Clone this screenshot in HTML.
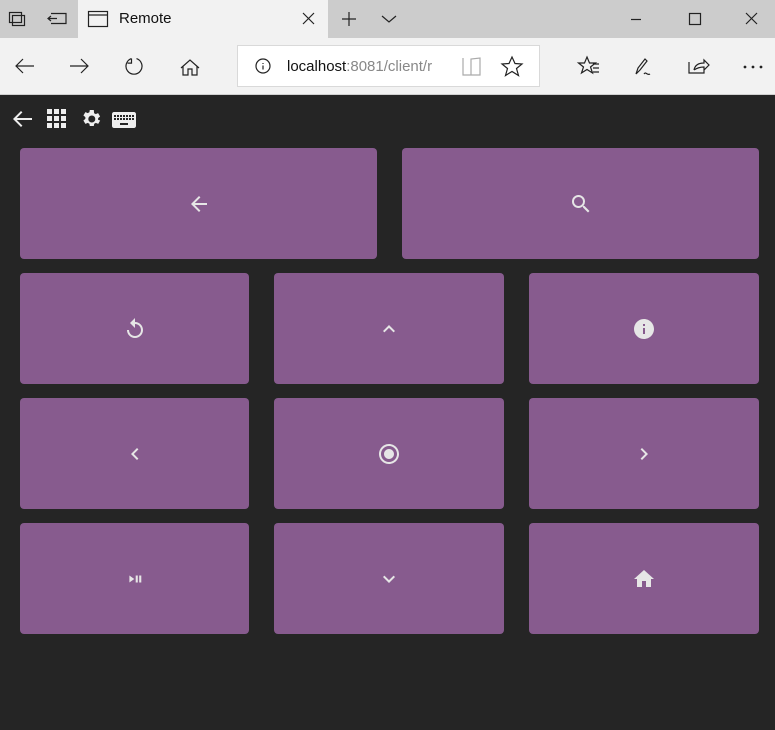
<!DOCTYPE html>
<html><head><meta charset="utf-8"><style>
*{margin:0;padding:0;box-sizing:border-box}
body{width:775px;height:730px;background:#252525;font-family:"Liberation Sans",sans-serif;position:relative;overflow:hidden}
.abs{position:absolute}
.btn{position:absolute;background:#875b8e;border-radius:4px;display:flex;align-items:center;justify-content:center}
.btn svg{width:24px;height:24px;fill:#e6e6e6}
.ico{position:absolute;stroke:#222;fill:none;stroke-width:1.2}
</style></head><body>
<div class="abs" style="left:0;top:0;width:775px;height:38px;background:#cccccc"></div>
<div class="abs" style="left:78px;top:0;width:250px;height:38px;background:#f2f2f2"></div>
<div class="abs" style="left:0;top:38px;width:775px;height:56px;background:#f2f2f2"></div>
<div class="abs" style="left:0;top:94px;width:775px;height:1px;background:#d0d0d0"></div>
<div class="abs" style="left:119px;top:10px;font-size:15px;color:#111">Remote</div>
<svg class="ico" style="left:0;top:0" width="775" height="94" viewBox="0 0 775 94">
<rect x="9.5" y="12.5" width="12" height="10"/><rect x="12.5" y="15.5" width="12" height="10"/>
<path d="M51 13.5h15v10h-15M49 18.5h8M51 16l-3 2.5 3 2.5"/>
<rect x="88.5" y="11.5" width="19" height="15"/><path d="M88.5 15h19"/>
<path d="M303 13l11 11M314 13l-11 11"/>
<path d="M349 12v14M342 19h14"/>
<path d="M382 16l7 6 7-6"/>
<path d="M631 19.5h10"/><rect x="689.5" y="13.5" width="11" height="11"/><path d="M746 13l11 11M757 13l-11 11"/>
<path d="M34 66H16M23 59l-7 7 7 7"/>
<path d="M70 66h18M81 59l7 7-7 7"/>
<path d="M131.5 58.6a8 8 0 1 0 5 0M131.5 58.6v4.5h-4"/>
<path d="M181 68l9-8 9 8M183 66v9h5v-6h4v6h5v-9"/>
<rect x="237.5" y="45.5" width="302" height="41" fill="#fff" stroke="#d9d9d9" stroke-width="1"/>
<circle cx="263" cy="66" r="7"/><path d="M263 63v1M263 65.5v4"/>
<path d="M463 58v17h8v-16M471 59v16h9V58z" stroke="#aaa"/>
<path d="M512 57l3 6.5 7 .5-5.5 4.5 2 7-6.5-4-6.5 4 2-7-5.5-4.5 7-.5z"/>
<path d="M587 57l2.5 6h6l-5 4 2 6-5.5-3.5-5.5 3.5 2-6-5-4h6zM593 64h6M593 68h6M593 72h6"/>
<path d="M636 74l2-6 7-9 2 2-7 9zM644 74c2-3 3 2 6 0"/>
<path d="M689 62v11h15v-5M694 70c1-5 5-7 10-7v-3l5 5-5 5v-3c-4 0-7 1-10 3"/>
<circle cx="745" cy="67" r=".8" fill="#222"/><circle cx="753" cy="67" r=".8" fill="#222"/><circle cx="761" cy="67" r=".8" fill="#222"/>
</svg>
<div class="abs" style="left:287px;top:58px;font-size:15px;color:#111">localhost<span style="color:#888">:8081/client/r</span></div>
<svg class="abs" style="left:10px;top:107px" width="130" height="26" viewBox="0 0 130 26" fill="#eee">
<path d="M22 11H6.8l5.6-5.6L11 4l-8 8 8 8 1.4-1.4L6.8 13H22z"/>
<g transform="translate(36,1)"><rect x="1" y="1" width="5" height="5"/><rect x="8" y="1" width="5" height="5"/><rect x="15" y="1" width="5" height="5"/><rect x="1" y="8" width="5" height="5"/><rect x="8" y="8" width="5" height="5"/><rect x="15" y="8" width="5" height="5"/><rect x="1" y="15" width="5" height="5"/><rect x="8" y="15" width="5" height="5"/><rect x="15" y="15" width="5" height="5"/></g>
<g transform="translate(69,0)"><path d="M19.1 12.9a7 7 0 0 0 0-1.8l2-1.6-2-3.4-2.4 1a7 7 0 0 0-1.6-.9L14.8 3h-4l-.4 2.2a7 7 0 0 0-1.6.9l-2.4-1-2 3.4 2 1.6a7 7 0 0 0 0 1.8l-2 1.6 2 3.4 2.4-1a7 7 0 0 0 1.6.9l.4 2.2h4l.4-2.2a7 7 0 0 0 1.6-.9l2.4 1 2-3.4zM12.8 15.5a3.5 3.5 0 1 1 0-7 3.5 3.5 0 0 1 0 7z"/></g>
<g transform="translate(100,2)"><path d="M24 3H4C2.9 3 2 3.9 2 5v12c0 1.1.9 2 2 2h20c1.1 0 2-.9 2-2V5c0-1.1-.9-2-2-2zM13 6h2v2h-2zm0 3h2v2h-2zM10 6h2v2h-2zm0 3h2v2h-2zM7 6h2v2H7zm0 3h2v2H7zM4 9h2v2H4zm0-3h2v2H4zm14 10H10v-2h8zm0-5h-2V9h2zm0-3h-2V6h2zm3 3h-2V9h2zm0-3h-2V6h2zm3 3h-2V9h2zm0-3h-2V6h2z" fill-rule="evenodd"/></g>
</svg>
<div class="btn" style="left:20px;top:148px;width:357px;height:111px"><svg viewBox="0 0 24 24"><path d="M20 11H7.83l5.59-5.59L12 4l-8 8 8 8 1.41-1.41L7.83 13H20z"/></svg></div>
<div class="btn" style="left:402px;top:148px;width:357px;height:111px"><svg viewBox="0 0 24 24"><path d="M15.5 14h-.79l-.28-.27A6.47 6.47 0 0 0 16 9.5 6.5 6.5 0 1 0 9.5 16c1.61 0 3.090-.59 4.23-1.57l.27.28v.79l5 4.99L20.49 19zm-6 0C7.01 14 5 11.99 5 9.5S7.01 5 9.5 5 14 7.01 14 9.5 11.99 14 9.5 14z"/></svg></div>
<div class="btn" style="left:20px;top:273px;width:229px;height:111px"><svg viewBox="0 0 24 24"><path d="M12 5V1L7 6l5 5V7c3.31 0 6 2.69 6 6s-2.69 6-6 6-6-2.69-6-6H4c0 4.42 3.58 8 8 8s8-3.58 8-8-3.58-8-8-8z"/></svg></div>
<div class="btn" style="left:274px;top:273px;width:230px;height:111px"><svg viewBox="0 0 24 24"><path d="M12 8l-6 6 1.41 1.41L12 10.83l4.59 4.58L18 14z"/></svg></div>
<div class="btn" style="left:529px;top:273px;width:230px;height:111px"><svg viewBox="0 0 24 24"><path d="M12 2C6.48 2 2 6.48 2 12s4.48 10 10 10 10-4.48 10-10S17.52 2 12 2zm1 15h-2v-6h2zm0-8h-2V7h2z"/></svg></div>
<div class="btn" style="left:20px;top:398px;width:229px;height:111px"><svg viewBox="0 0 24 24"><path d="M15.41 16.59L10.83 12l4.58-4.59L14 6l-6 6 6 6z"/></svg></div>
<div class="btn" style="left:274px;top:398px;width:230px;height:111px"><svg viewBox="0 0 24 24"><path d="M12 7c-2.76 0-5 2.24-5 5s2.240 5 5 5 5-2.24 5-5-2.24-5-5-5zm0-5C6.48 2 2 6.48 2 12s4.48 10 10 10 10-4.48 10-10S17.52 2 12 2zm0 18c-4.42 0-8-3.58-8-8s3.58-8 8-8 8 3.58 8 8-3.58 8-8 8z"/></svg></div>
<div class="btn" style="left:529px;top:398px;width:230px;height:111px"><svg viewBox="0 0 24 24"><path d="M8.59 16.59L13.17 12 8.59 7.41 10 6l6 6-6 6z"/></svg></div>
<div class="btn" style="left:20px;top:523px;width:229px;height:111px"><svg viewBox="0 0 24 24"><path d="M4 7v10l7-5zm9 0h3v10h-3zm5 0h3v10h-3z" transform="translate(12 12) scale(.7) translate(-12 -12)"/></svg></div>
<div class="btn" style="left:274px;top:523px;width:230px;height:111px"><svg viewBox="0 0 24 24"><path d="M16.59 8.59L12 13.17 7.41 8.59 6 10l6 6 6-6z"/></svg></div>
<div class="btn" style="left:529px;top:523px;width:230px;height:111px"><svg viewBox="0 0 24 24"><path d="M10 20v-6h4v6h5v-8h3L12 3 2 12h3v8z"/></svg></div>
</body></html>
